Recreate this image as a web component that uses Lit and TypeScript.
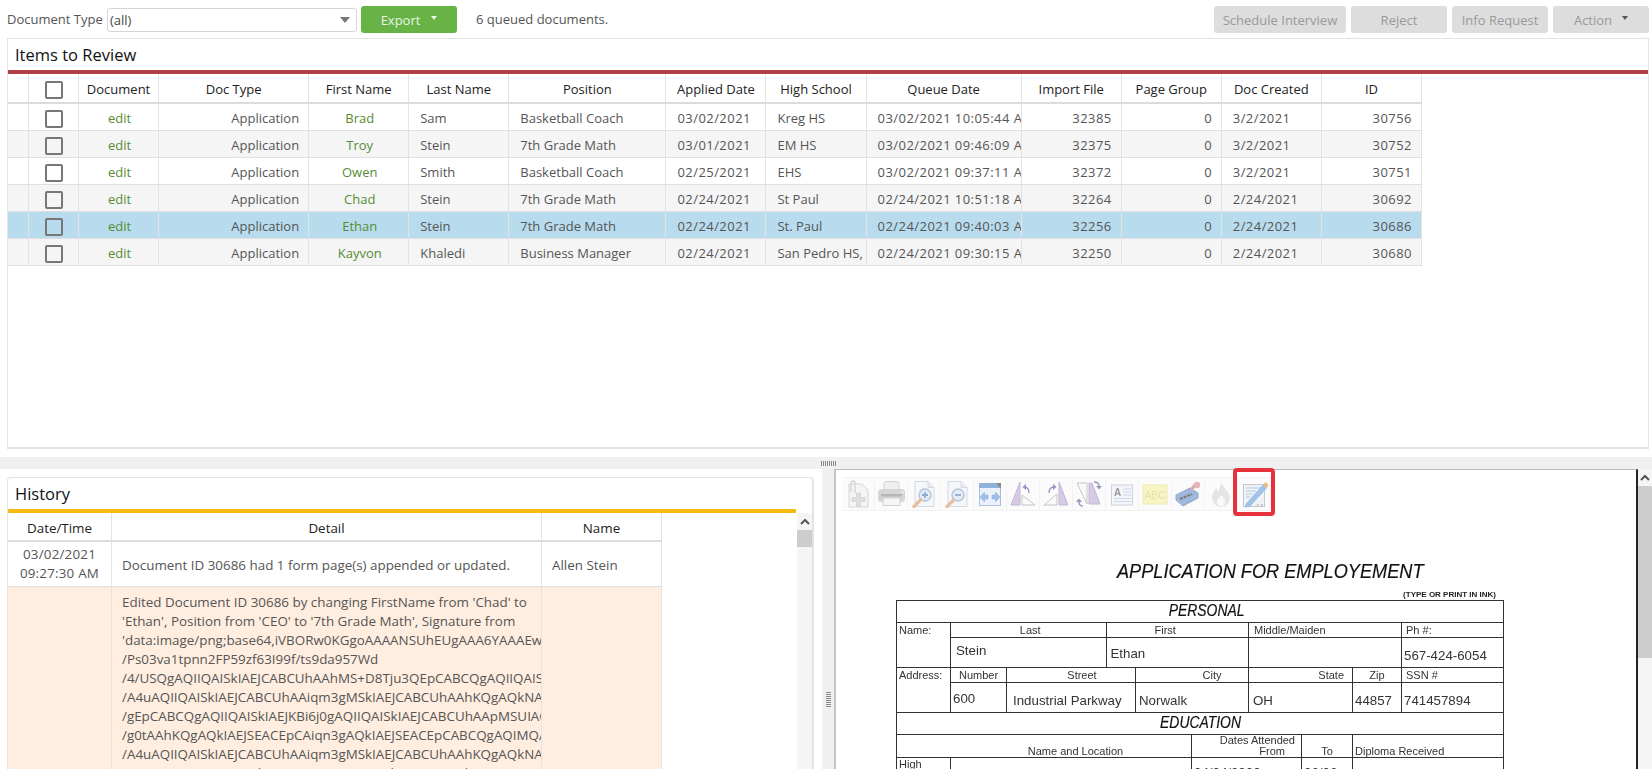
import { LitElement, html, css, svg } from "lit";
import { customElement } from "lit/decorators.js";

const COLS = [21, 50, 80, 150, 100, 100, 157, 100, 100, 155, 100, 100, 100, 100];
const HEAD = ["", "", "Document", "Doc Type", "First Name", "Last Name", "Position", "Applied Date", "High School", "Queue Date", "Import File", "Page Group", "Doc Created", "ID"];
const ROWS = [
  ["Brad", "Sam", "Basketball Coach", "03/02/2021", "Kreg HS", "03/02/2021 10:05:44 AM", "32385", "3/2/2021", "30756"],
  ["Troy", "Stein", "7th Grade Math", "03/01/2021", "EM HS", "03/02/2021 09:46:09 AM", "32375", "3/2/2021", "30752"],
  ["Owen", "Smith", "Basketball Coach", "02/25/2021", "EHS", "03/02/2021 09:37:11 AM", "32372", "3/2/2021", "30751"],
  ["Chad", "Stein", "7th Grade Math", "02/24/2021", "St Paul", "02/24/2021 10:51:18 AM", "32264", "2/24/2021", "30692"],
  ["Ethan", "Stein", "7th Grade Math", "02/24/2021", "St. Paul", "02/24/2021 09:40:03 AM", "32256", "2/24/2021", "30686"],
  ["Kayvon", "Khaledi", "Business Manager", "02/24/2021", "San Pedro HS,", "02/24/2021 09:30:15 AM", "32250", "2/24/2021", "30680"],
];
const DETAIL = [
  "Edited Document ID 30686 by changing FirstName from 'Chad' to",
  "'Ethan', Position from 'CEO' to '7th Grade Math', Signature from",
  "'data:image/png;base64,iVBORw0KGgoAAAANSUhEUgAAA6YAAAEwCAYAAAB",
  "/Ps03va1tpnn2FP59zf63I99f/ts9da957Wd",
  "/4/USQgAQIIQAISkIAEJCABCUhAAhMS+D8Tju3QEpCABCQgAQIIQAISkIAEJ",
  "/A4uAQIIQAISkIAEJCABCUhAAiqm3gMSkIAEJCABCUhAAhKQgAQkNAISkIAE",
  "/gEpCABCQgAQIIQAISkIAEJKBi6j0gAQIIQAISkIAEJCABCUhAApMSUIAQIIQ",
  "/g0tAAhKQgAQkIAEJSEACEpCAiqn3gAQkIAEJSEACEpCABCQgAQIMQAISkIAE",
  "/A4uAQIIQAISkIAEJCABCUhAAiqm3gMSkIAEJCABCUhAAhKQgAQkNAISkIAE",
  "/gEpCABCQgAQIIQAISkIAEJKBi6j0gAQIIQAISkIAEJCABCUhAApMSUIAQIIQ",
];

const page = () => svg`<path d="M5 1.500h13l6 6v19H5z" fill="#f5f7fb" stroke="#cdd4df"/><path d="M18 1.500v6h6" fill="#e4e8ef" stroke="#cdd4df"/>`;
const glass = (sign: any) => svg`${page()}<circle cx="15" cy="15" r="6" fill="#dfe9f6" stroke="#a9bcd8" stroke-width="1.5"/>${sign}<path d="M10.500 20L4 26.500" stroke="#e6b48c" stroke-width="3.200" stroke-linecap="round"/>`;
const ICONS = [
  svg`<path d="M5 4h13l6 6v17H5z" fill="#f4f4f4" stroke="#cfcfcf"/><path d="M7 12V3a2 2 0 014 0v10" fill="none" stroke="#cccccc" stroke-width="1.300"/><path d="M12.500 13h4v4.500H21v4h-4.500V26h-4v-4.500H8v-4h4.500z" fill="#dadada" stroke="#c4c4c4" stroke-width=".6"/>`,
  svg`<rect x="7" y="1.500" width="15" height="10" rx="2" fill="#ededed" stroke="#cdcdcd"/><rect x="1" y="9" width="27" height="13" rx="3.500" fill="#cfcfcf"/><rect x="6" y="18" width="17" height="7.500" fill="#f6f6f6" stroke="#c8c8c8"/><rect x="4" y="14" width="21" height="2.500" fill="#ababab"/><circle cx="25.500" cy="12" r="1.200" fill="#f1f3c8"/>`,
  glass(svg`<path d="M12 15h6M15 12v6" stroke="#7d9cc9" stroke-width="1.800"/>`),
  glass(svg`<path d="M12 15h6" stroke="#7d9cc9" stroke-width="1.800"/>`),
  svg`<rect x="3.500" y="3.500" width="21" height="22" fill="#e8f0fa" stroke="#9db6d8"/><rect x="3" y="3" width="22" height="5" fill="#7fa5d8"/><path d="M20 3h5v6z" fill="#777"/><path d="M4 17l4.500-5v3H12v4H8.500v3zM24 17l-4.500-5v3H16v4h3.500v3z" fill="#8fb4e6" stroke="#7b9fd0" stroke-width=".5"/>`,
  svg`<path d="M11 2v23H2z" fill="#cfc3e0" stroke="#bbaad2"/><path d="M13 15v10h13z" fill="#fafafa" stroke="#bcbcbc"/><path d="M20 13c0-4-2-6-5-6" fill="none" stroke="#7f88b8" stroke-width="1.300"/><path d="M17 4l-3.500 3 3.500 3z" fill="#7f88b8"/>`,
  svg`<path d="M17 2v23h9z" fill="#cfc3e0" stroke="#bbaad2"/><path d="M15 14v11H2z" fill="#fafafa" stroke="#bcbcbc"/><path d="M7 13c0-4 2-6 5-6" fill="none" stroke="#7f88b8" stroke-width="1.300"/><path d="M11 4l3.500 3-3.500 3z" fill="#7f88b8"/>`,
  svg`<path d="M2 3h10v21z" fill="#fafafa" stroke="#bcbcbc"/><path d="M14 3h3l8 21H14z" fill="#cfc3e0" stroke="#bbaad2"/><path d="M19 2c3 0 5 1 5 4" fill="none" stroke="#7f88b8" stroke-width="1.300"/><path d="M21 6h6l-3 3.500z" fill="#7f88b8"/><path d="M8 26c-3 0-4-1-4-4" fill="none" stroke="#7f88b8" stroke-width="1.300"/><path d="M1 22h6l-3-3.500z" fill="#7f88b8"/>`,
  svg`<rect x="3.500" y="5" width="21" height="20" fill="#f2f5fa" stroke="#c4ccd8"/><text x="9.500" y="15.500" font-family="Liberation Sans" font-size="10" font-weight="700" fill="#888" text-anchor="middle">A</text><path d="M15 9h8M15 12h8M15 15h8M6 18.500h17M6 21.500h17" stroke="#c3d3e8"/>`,
  svg`<rect x="2" y="5" width="24" height="19" fill="#f7f3bc" stroke="#ece7a8"/><text x="14" y="19" font-family="Liberation Sans" font-size="10.500" fill="#e3dd9a" text-anchor="middle">ABC</text>`,
  svg`<path d="M2 15l14-7 8 5v5L9 26l-7-6z" fill="#8eaed6" stroke="#7b9ac4"/><path d="M6 19l12-5" stroke="#666" stroke-width="2.200" stroke-dasharray="3 1"/><path d="M17 10l4-5" stroke="#d99aa2" stroke-width="3.200"/><circle cx="23" cy="5" r="3.200" fill="#e3aab0"/>`,
  svg`<path d="M14 1c1 6 9 10 9 17a9 9 0 01-18 0c0-5 2-6 4-10 1 2 2 3 2 4 1-3 3-7 3-11z" fill="#e2e2e2"/><path d="M14 15c2 2 4 4 4 7a4 4 0 01-8 0c0-3 3-4 4-7z" fill="#fafafa"/>`,
  svg`<rect x="3.500" y="4.500" width="21" height="22" fill="#eef2f8" stroke="#b8c0cc"/><path d="M6 8h15M6 11h10M6 14h7M6 17h4" stroke="#a9c3e2"/><path d="M6 24L23 5l3.500 3L10 26l-4.500 1z" fill="#8fbbe8" stroke="#7aa6d6" stroke-width=".6"/><path d="M23 5l2.500-3 3.500 3-2.500 3z" fill="#e8b36e"/><path d="M17 25h1.500M21 25h1.500" stroke="#777"/>`,
];

@customElement("app-root")
export class AppRoot extends LitElement {
  static styles = css`
    :host { display: block; width: 1652px; height: 769px; overflow: hidden; position: relative; background: #fff; font-family: "Open Sans", sans-serif; font-size: 13px; color: #555; }
    .top { height: 38px; display: flex; align-items: center; padding: 0 3px 0 7px; box-sizing: border-box; }
    .lbl { width: 100px; color: #555; }
    .select { width: 250px; height: 24px; margin-top: 2px; box-sizing: border-box; border: 1px solid #d5d5d5; border-radius: 3px; display: flex; align-items: center; justify-content: space-between; padding: 0 6px 0 2px; color: #444; }
    .tri { width: 0; height: 0; border-left: 5px solid transparent; border-right: 5px solid transparent; border-top: 6px solid #777; }
    .export { width: 96px; height: 27px; margin: 1px 0 0 4px; background: #67b346; color: #eaf5e4; border-radius: 3px; display: flex; align-items: center; justify-content: center; gap: 11px; }
    .tri-s { width: 0; height: 0; border-left: 3.5px solid transparent; border-right: 3.5px solid transparent; border-top: 4px solid currentColor; margin-bottom: 3px; }
    .count { margin-left: 19px; }
    .right { margin-left: auto; display: flex; gap: 5px; margin-top: 1px; }
    .btn { height: 27px; background: #dddddd; color: #999; border-radius: 3px; display: flex; align-items: center; justify-content: center; gap: 10px; }
    .b-wide { width: 132px; }
    .b-std { width: 96px; }
    .b-dark { color: #555; }
    .panel { margin-left: 7px; margin-right: 3px; height: 411px; box-sizing: border-box; border: 1px solid #e3e3e3; border-bottom-width: 2px; }
    .title { height: 31px; font-size: 16.5px; color: #111; line-height: 31px; padding-left: 7px; box-sizing: border-box; }
    .bar-red { height: 4px; background: #b04045; }
    .bar-yel { height: 4px; background: #f5bb14; }
    table.grid { border-collapse: separate; border-spacing: 0; table-layout: fixed; }
    table.items { width: 1414px; }
    .grid th { height: 30px; box-sizing: border-box; font-weight: 400; color: #222; border-right: 1px solid #e3e3e3; border-bottom: 2px solid #dcdcdc; padding: 2px 0 0; text-align: center; white-space: nowrap; overflow: hidden; }
    .grid td { box-sizing: border-box; border-right: 1px solid #e3e3e3; border-bottom: 1px solid #dfdfdf; padding: 2px 9px 0 11px; white-space: nowrap; overflow: hidden; }
    .items td { height: 27px; }
    .items td.flush { padding-right: 0; }
    .items td.n { letter-spacing: 0.45px; }
    .items td.cb, .items th.cb, .items td.sp { padding: 2px 0 0; text-align: center; }
    .c { text-align: center; }
    .r { text-align: right; }
    .g { color: #578c35; }
    tr.alt td { background: #f5f5f5; }
    tr.sel td { background: #b8dcee; }
    .check { display: inline-block; vertical-align: middle; width: 18px; height: 18px; box-sizing: border-box; border: 2px solid #777; border-radius: 2px; background: transparent; }
    .gap { height: 8px; }
    .band { height: 12px; background: #f0f0f0; display: flex; padding-left: 821px; align-items: center; }
    .grip-h { width: 15px; height: 5px; background: repeating-linear-gradient(90deg, #888 0 1px, transparent 1px 2px); }
    .lower { display: flex; height: 300px; }
    .left { width: 822px; padding: 8px 8px 0 7px; box-sizing: border-box; flex: none; }
    .hist { height: 320px; border: 1px solid #e3e3e3; border-right-width: 2px; border-radius: 4px 4px 0 0; display: flex; flex-direction: column; width: 807px; box-sizing: border-box; font-size: 13.4px; }
    .hist-head { width: 788px; }
    .hist-body { display: flex; flex: 1; }
    .hist-table { width: 788px; flex: none; }
    .hist-table table { width: 654px; }
    .hist-table th { height: 29px; }
    .hist-table td { line-height: 19px; }
    .hist-table td:not(.date) { padding-left: 10px; }
    .row1 { height: 45px; }
    .grid td.date { padding: 0; text-align: center; letter-spacing: 0.2px; }
    .grid td.rest { background: #ffeee0; vertical-align: top; padding-top: 6px; }
    .vscroll { width: 15px; margin-left: 1px; display: flex; flex-direction: column; align-items: center; background: #f5f5f5; }
    .up { height: 17px; display: flex; align-items: center; }
    .thumb { width: 15px; height: 17px; background: #cdcdcd; }
    .split { width: 12px; flex: none; background: #f0f0f0; display: flex; justify-content: center; }
    .grip-v { width: 5px; height: 15px; margin-top: 223px; background: repeating-linear-gradient(0deg, #888 0 1px, transparent 1px 2px); }
    .viewer { flex: 1; display: flex; min-width: 0; }
    .doc { width: 804px; flex: none; box-sizing: border-box; border-left: 2px solid #c4c4c4; border-top: 1px solid #bbb; border-right: 2px solid #222; padding: 7px 0 0 6px; }
    .tools { display: flex; position: relative; width: fit-content; background: #fbfbfb; border-top: 1px solid #f5f5f5; border-bottom: 1px solid #f2f2f2; }
    .tool { width: 33px; height: 32px; box-sizing: border-box; border-right: 1px solid #f3f3f3; display: flex; align-items: center; justify-content: center; }
    .tool:last-child { border-right: 0; }
    .tool svg { filter: blur(0.45px); opacity: 0.85; }
    .hl { position: absolute; left: 391px; top: -10px; width: 42px; height: 48px; box-sizing: border-box; border: 4px solid #e6333b; border-radius: 4px; }
    .sheet { padding: 48px 0 0 54px; font-family: "Liberation Sans", sans-serif; color: #222; filter: blur(0.35px); }
    .apptitle { font-size: 21px; font-style: italic; color: #111; margin-left: 221px; line-height: 24px; white-space: nowrap; transform: scaleX(0.865); transform-origin: left center; -webkit-text-stroke: 0.2px #111; }
    .hint { font-size: 8px; font-weight: 700; color: #222; text-align: right; width: 604px; margin-top: 7px; line-height: 10px; white-space: nowrap; padding-right: 4px; box-sizing: border-box; }
    .form { border-collapse: collapse; table-layout: fixed; width: 607px; margin-top: 0; font-size: 11px; }
    .form td { box-sizing: border-box; border: 1px solid #333; padding: 0 2px; line-height: 12px; white-space: nowrap; overflow: hidden; vertical-align: top; color: #333; }
    .form td.sec { text-align: center; height: 20px; line-height: 20px; padding: 0; }
    .form td.sec-p { padding-left: 12px; }
    .form td.sec21 { height: 21px; }
    .sec span { display: inline-block; font-size: 16px; font-style: italic; color: #111; transform: scaleX(0.87); -webkit-text-stroke: 0.2px #111; }
    .form td.h16 { height: 15px; line-height: 14px; }
    .form td.h15 { height: 15px; line-height: 14px; }
    .form .ctr { text-align: center; }
    .form .rt { text-align: right; }
    .form td.val { height: 30px; font-size: 13.3px; vertical-align: bottom; line-height: 16px; padding-bottom: 3px; }
    .form td.pb8 { padding-bottom: 8px; }
    .form td.pb5 { padding-bottom: 5px; }
    .form td.pl3 { padding-left: 3px; }
    .form td.pl4 { padding-left: 4px; }
    .form td.pl5 { padding-left: 5px; }
    .form td.pl6 { padding-left: 6px; }
    .form td.pr26 { padding-right: 26px; }
    .form td.pl24 { padding-left: 24px; }
    .form td.pl42 { padding-left: 42px; }
    .form td.pl65 { padding-left: 65px; }
    .form td.pr8 { padding-right: 8px; }
    .form td.ht { height: 23px; vertical-align: bottom; line-height: 10.500px; padding-bottom: 1px; }
    .form td.dates { text-align: right; padding-right: 6px; }
    .from { display: inline-block; margin-right: 10px; }
    .form td.hi { height: 40px; line-height: 12px; }
    .form td.hv { font-size: 13.3px; padding-top: 9px; }
    .page-scroll { flex: 1; background: #f5f5f5; display: flex; flex-direction: column; align-items: center; }
    .page-scroll .thumb { width: 100%; height: 172px; }
  `;

  private chev() {
    return html`<svg width="10" height="7" viewBox="0 0 10 7"><path d="M1 6l4-4 4 4" fill="none" stroke="#555" stroke-width="2"/></svg>`;
  }

  private items() {
    return html`<table class="grid items">
      <colgroup>${COLS.map((w) => html`<col style="width:${w}px" />`)}</colgroup>
      <tr>${HEAD.map((h, i) => html`<th class=${i === 1 ? "cb" : ""}>${i === 1 ? html`<span class="check"></span>` : h}</th>`)}</tr>
      ${ROWS.map((r, i) => html`<tr class=${i === 4 ? "sel" : i % 2 ? "alt" : ""}>
        <td class="sp"></td>
        <td class="cb"><span class="check"></span></td>
        <td class="c g">edit</td>
        <td class="r">Application</td>
        <td class="c g">${r[0]}</td>
        <td>${r[1]}</td>
        <td>${r[2]}</td>
        <td class="n">${r[3]}</td>
        <td>${r[4]}</td>
        <td class="flush n">${r[5]}</td>
        <td class="r n">${r[6]}</td>
        <td class="r">0</td>
        <td class="n">${r[7]}</td>
        <td class="r n">${r[8]}</td>
      </tr>`)}
    </table>`;
  }

  private history() {
    return html`<div class="hist">
      <div class="hist-head">
        <div class="title">History</div>
        <div class="bar-yel"></div>
      </div>
      <div class="hist-body">
        <div class="hist-table">
          <table class="grid">
            <colgroup><col style="width:104px" /><col style="width:430px" /><col style="width:120px" /></colgroup>
            <tr><th>Date/Time</th><th>Detail</th><th>Name</th></tr>
            <tr class="row1">
              <td class="date">03/02/2021<br />09:27:30 AM</td>
              <td>Document ID 30686 had 1 form page(s) appended or updated.</td>
              <td>Allen Stein</td>
            </tr>
            <tr>
              <td class="rest"></td>
              <td class="rest">${DETAIL.map((l) => html`${l}<br />`)}</td>
              <td class="rest"></td>
            </tr>
          </table>
        </div>
        <div class="vscroll"><div class="up">${this.chev()}</div><div class="thumb"></div></div>
      </div>
    </div>`;
  }

  private form() {
    return html`<table class="form">
      <colgroup>${[54, 56, 99.5, 29.5, 56, 57, 53, 51, 49, 102].map((w) => html`<col style="width:${w}px" />`)}</colgroup>
      <tr><td class="sec sec-p" colspan="10"><span>PERSONAL</span></td></tr>
      <tr><td class="h16" rowspan="2">Name:</td><td class="h16 ctr pl6" colspan="2">Last</td><td class="h16 ctr pr26" colspan="3">First</td><td class="h16 pl5" colspan="3">Middle/Maiden</td><td class="h16 pl4">Ph #:</td></tr>
      <tr><td class="val pb8 pl5" colspan="2">Stein</td><td class="val pb5 pl4" colspan="3">Ethan</td><td class="val" colspan="3"></td><td class="val">567-424-6054</td></tr>
      <tr><td class="h15" rowspan="2">Address:</td><td class="h15 ctr">Number</td><td class="h15 ctr pl24" colspan="2">Street</td><td class="h15 ctr pl42" colspan="2">City</td><td class="h15 rt pr8" colspan="2">State</td><td class="h15 ctr">Zip</td><td class="h15 pl4">SSN #</td></tr>
      <tr><td class="val pb5">600</td><td class="val pl6" colspan="2">Industrial Parkway</td><td class="val pl3" colspan="2">Norwalk</td><td class="val pl4" colspan="2">OH</td><td class="val">44857</td><td class="val">741457894</td></tr>
      <tr><td class="sec sec21" colspan="10"><span>EDUCATION</span></td></tr>
      <tr><td class="ht ctr pl65" colspan="5">Name and Location</td><td class="ht dates" colspan="2">Dates Attended<br /><span class="from">From</span></td><td class="ht ctr">To</td><td class="ht" colspan="2">Diploma Received</td></tr>
      <tr><td class="hi">High</td><td class="hi" colspan="4"></td><td class="hi hv" colspan="2">04/04/2000</td><td class="hi hv">06/06</td><td class="hi" colspan="2"></td></tr>
    </table>`;
  }

  render() {
    return html`
      <div class="top">
        <span class="lbl">Document Type</span>
        <div class="select"><span>(all)</span><span class="tri"></span></div>
        <div class="export">Export <span class="tri-s"></span></div>
        <span class="count">6 queued documents.</span>
        <div class="right">
          <div class="btn b-wide">Schedule Interview</div>
          <div class="btn b-std">Reject</div>
          <div class="btn b-std">Info Request</div>
          <div class="btn b-std">Action <span class="tri-s b-dark"></span></div>
        </div>
      </div>
      <div class="panel">
        <div class="title">Items to Review</div>
        <div class="bar-red"></div>
        ${this.items()}
      </div>
      <div class="gap"></div>
      <div class="band"><div class="grip-h"></div></div>
      <div class="lower">
        <div class="left">${this.history()}</div>
        <div class="split"><div class="grip-v"></div></div>
        <div class="viewer">
          <div class="doc">
            <div class="tools">
              ${ICONS.map((ic) => html`<div class="tool"><svg width="28" height="28" viewBox="0 0 28 28">${ic}</svg></div>`)}
              <div class="hl"></div>
            </div>
            <div class="sheet">
              <div class="apptitle">APPLICATION FOR EMPLOYEMENT</div>
              <div class="hint">(TYPE OR PRINT IN INK)</div>
              ${this.form()}
            </div>
          </div>
          <div class="page-scroll"><div class="up">${this.chev()}</div><div class="thumb"></div></div>
        </div>
      </div>
    `;
  }
}
